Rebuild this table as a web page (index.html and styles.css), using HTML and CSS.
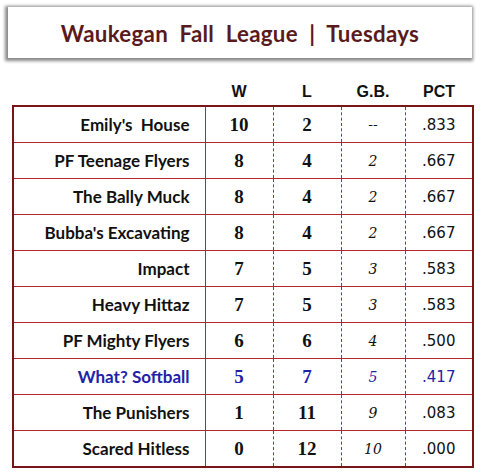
FILE: index.html
```html
<!DOCTYPE html>
<html>
<head>
<meta charset="utf-8">
<link rel="stylesheet" href="styles.css">
</head>
<body>
<div class="page">
  <div class="title-box">
    <h1 class="title">Waukegan&nbsp; Fall&nbsp; League&nbsp; |&nbsp; Tuesdays</h1>
  </div>
  <table class="standings">
    <colgroup>
      <col class="c-name"><col class="c-w"><col class="c-l"><col class="c-gb"><col class="c-pct">
    </colgroup>
    <thead>
      <tr><th></th><th>W</th><th>L</th><th>G.B.</th><th>PCT</th></tr>
    </thead>
    <tbody>
      <tr><td class="name">Emily's&nbsp; House</td><td class="num">10</td><td class="num">2</td><td class="gb dash">--</td><td class="pct">.833</td></tr>
      <tr><td class="name">PF Teenage Flyers</td><td class="num">8</td><td class="num">4</td><td class="gb">2</td><td class="pct">.667</td></tr>
      <tr><td class="name">The Bally Muck</td><td class="num">8</td><td class="num">4</td><td class="gb">2</td><td class="pct">.667</td></tr>
      <tr><td class="name">Bubba's Excavating</td><td class="num">8</td><td class="num">4</td><td class="gb">2</td><td class="pct">.667</td></tr>
      <tr><td class="name">Impact</td><td class="num">7</td><td class="num">5</td><td class="gb">3</td><td class="pct">.583</td></tr>
      <tr><td class="name">Heavy Hittaz</td><td class="num">7</td><td class="num">5</td><td class="gb">3</td><td class="pct">.583</td></tr>
      <tr><td class="name">PF Mighty Flyers</td><td class="num">6</td><td class="num">6</td><td class="gb">4</td><td class="pct">.500</td></tr>
      <tr class="highlight"><td class="name">What? Softball</td><td class="num">5</td><td class="num">7</td><td class="gb">5</td><td class="pct">.417</td></tr>
      <tr><td class="name">The Punishers</td><td class="num">1</td><td class="num">11</td><td class="gb">9</td><td class="pct">.083</td></tr>
      <tr><td class="name">Scared Hitless</td><td class="num">0</td><td class="num">12</td><td class="gb">10</td><td class="pct">.000</td></tr>
    </tbody>
  </table>
</div>
</body>
</html>
```
FILE: styles.css
```css
html, body {
  margin: 0;
  padding: 0;
  background: #ffffff;
}

.page {
  width: 482px;
  height: 472px;
  padding-top: 7px;
  box-sizing: border-box;
}

.title-box {
  margin: 0 10px 0 8px;
  height: 51px;
  background: #ffffff;
  box-shadow: -1px 1px 3px 2px #8a8a8a;
  display: flex;
  align-items: center;
  justify-content: center;
}

.title {
  margin: 0;
  padding-top: 2px;
  font-family: "Lato", "Open Sans", sans-serif;
  font-weight: bold;
  font-size: 22.3px;
  color: #5a1a1c;
  letter-spacing: 0.3px;
  white-space: nowrap;
}

.standings {
  margin: 21px 0 0 12px;
  width: 460px;
  border-collapse: collapse;
  table-layout: fixed;
}

.c-name { width: 192px; }
.c-w { width: 68px; }
.c-l { width: 68px; }
.c-gb { width: 64px; }
.c-pct { width: 68px; }

.standings th {
  height: 26px;
  padding: 0;
  font-family: "Liberation Sans", Arial, sans-serif;
  font-weight: bold;
  font-size: 16px;
  color: #111111;
  text-align: center;
  vertical-align: middle;
}

.standings td {
  height: 35px;
  padding: 0;
  border-top: 1px solid #b8252a;
  border-bottom: 1px solid #b8252a;
  text-align: center;
  vertical-align: middle;
  color: #111111;
}

.standings tbody tr:first-child td { border-top: 2px solid #7a1517; }
.standings tbody tr:last-child td { border-bottom: 2px solid #7a1517; }

.standings td.name {
  border-left: 2px solid #7a1517;
  border-right: 1px solid #b8252a;
  text-align: right;
  padding-right: 15px;
  font-family: "Lato", "Open Sans", sans-serif;
  font-weight: bold;
  font-size: 17px;
}

.standings td.num {
  border-right: 1px dashed #b8252a;
  font-family: "Liberation Serif", "Times New Roman", serif;
  font-weight: bold;
  font-size: 19px;
}

.standings td.gb {
  border-right: 1px dashed #b8252a;
  font-family: "DejaVu Serif", serif;
  font-style: italic;
  font-size: 14px;
}

.standings td.gb.dash {
  font-family: "DejaVu Sans", sans-serif;
  font-style: normal;
  font-size: 13px;
}

.standings td.pct {
  border-right: 2px solid #7a1517;
  font-family: "DejaVu Sans", sans-serif;
  font-size: 15px;
}

.standings tr.highlight td {
  color: #2222a8;
}
```
